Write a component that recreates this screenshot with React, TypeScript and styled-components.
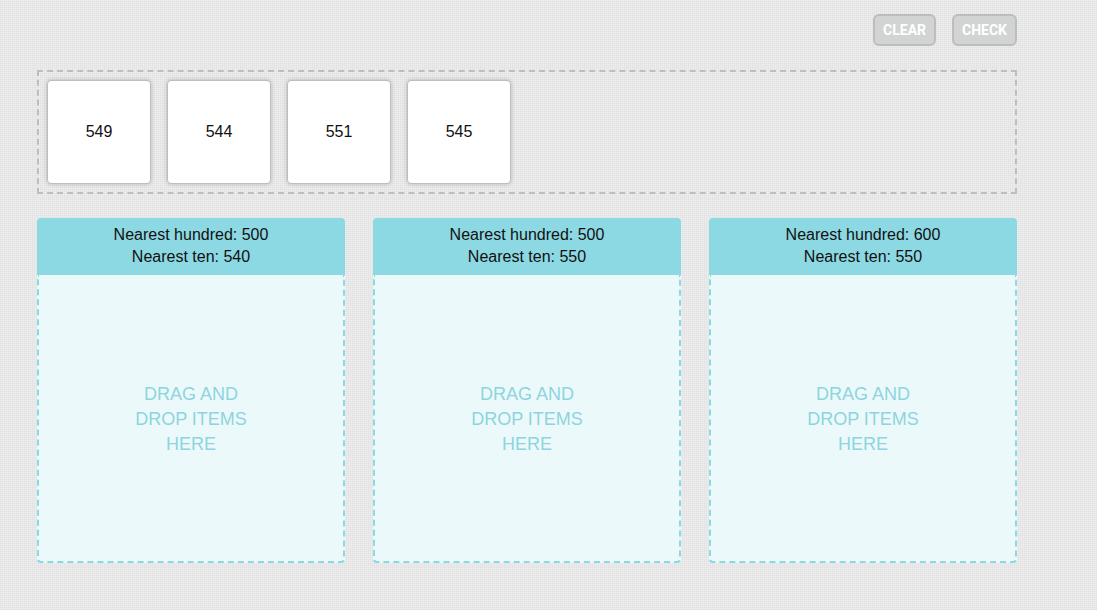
import React from 'react';
import styled, { createGlobalStyle } from 'styled-components';

const GlobalStyle = createGlobalStyle`
  *, *::before, *::after { box-sizing: border-box; }
  body {
    margin: 0;
    min-height: 100vh;
    color: #111;
    font: 16px/22px 'Liberation Sans', Arial, sans-serif;
    background-color: #eeeeee;
    background-image:
      repeating-linear-gradient(90deg, rgba(0, 0, 0, 0.03) 0 1px, transparent 1px 2px),
      repeating-linear-gradient(0deg, rgba(0, 0, 0, 0.025) 0 1px, transparent 1px 2px);
  }
`;

const Page = styled.main`
  display: flex;
  flex-direction: column;
  gap: 24px;
  padding: 14px 80px 24px 37px;
`;

const Toolbar = styled.div`
  display: flex;
  justify-content: flex-end;
  gap: 16px;
`;

const ToolButton = styled.button`
  height: 32px;
  padding: 0 8px;
  border: 2px solid #bcbebd;
  border-radius: 6px;
  background: #d2d4d3;
  color: #fff;
  font: 700 14px/20px Roboto, sans-serif;
  text-transform: uppercase;
`;

const Tray = styled.section`
  display: flex;
  flex-wrap: wrap;
  gap: 16px;
  padding: 8px;
  border: 2px dashed #bebebe;
`;

const Card = styled.div`
  display: flex;
  align-items: center;
  justify-content: center;
  width: 104px;
  height: 104px;
  border: 1px solid #bdbdbd;
  border-radius: 4px;
  background: #fff;
  box-shadow: 0 0 4px rgba(0, 0, 0, 0.22);
  cursor: grab;
`;

const Bins = styled.div`
  display: grid;
  grid-template-columns: repeat(3, minmax(0, 1fr));
  gap: 28px;
`;

const Bin = styled.section`
  display: flex;
  flex-direction: column;
`;

const BinHeader = styled.header`
  padding: 6px 8px 7px;
  border-radius: 4px 4px 0 0;
  background: #8cd9e3;
  text-align: center;
`;

const DropArea = styled.div`
  display: flex;
  align-items: center;
  justify-content: center;
  min-height: 288px;
  padding-top: 2px;
  border: 2px dashed #8cd9e3;
  border-top: 0;
  border-radius: 0 0 4px 4px;
  background: #ecf9fb;
`;

const Hint = styled.p`
  max-width: 128px;
  margin: 0;
  color: #8cd5df;
  font-size: 18px;
  line-height: 25px;
  text-align: center;
  text-transform: uppercase;
`;

const numbers = [549, 544, 551, 545];

const bins = [
  { hundred: 500, ten: 540 },
  { hundred: 500, ten: 550 },
  { hundred: 600, ten: 550 },
];

export default function App() {
  return (
    <>
      <GlobalStyle />
      <Page>
        <Toolbar>
          <ToolButton type="button">Clear</ToolButton>
          <ToolButton type="button">Check</ToolButton>
        </Toolbar>
        <Tray>
          {numbers.map((value) => (
            <Card key={value} draggable>
              {value}
            </Card>
          ))}
        </Tray>
        <Bins>
          {bins.map(({ hundred, ten }) => (
            <Bin key={`${hundred}-${ten}`}>
              <BinHeader>
                <div>Nearest hundred: {hundred}</div>
                <div>Nearest ten: {ten}</div>
              </BinHeader>
              <DropArea>
                <Hint>Drag and drop items here</Hint>
              </DropArea>
            </Bin>
          ))}
        </Bins>
      </Page>
    </>
  );
}
